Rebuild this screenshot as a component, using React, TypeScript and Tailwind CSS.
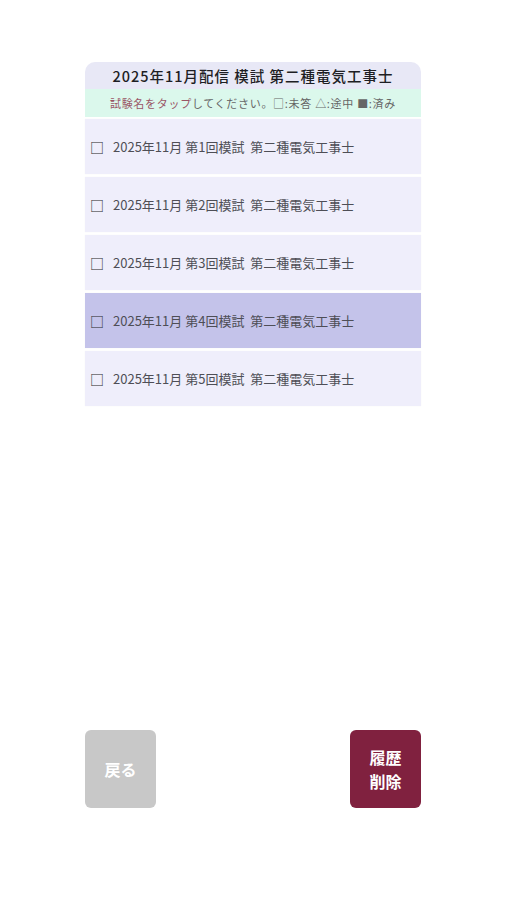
import React from "react";

const font = { fontFamily: '"Noto Sans CJK JP", "Noto Sans", sans-serif' };

export default function App() {
  const items = [1, 2, 3, 4, 5];
  return (
    <div className="min-h-[900px] w-full bg-white flex flex-col items-center" style={font}>
      <div className="mt-[62px] w-[336px] flex flex-col">
        <div className="h-[27px] rounded-t-[10px] bg-[#e8e8f6] flex items-center justify-center text-[14.5px] font-medium text-[#1e1e24] tracking-[1px]">
          2025年11月配信 模試 第二種電気工事士
        </div>
        <div className="h-[28px] bg-[#dbf8ec] flex items-center justify-center text-[11px] tracking-[0.7px] text-[#666]">
          <span className="text-[#9a5566]">試験名をタップ</span>
          <span>してください。□:未答 △:途中 ■:済み</span>
        </div>
        <div className="flex flex-col gap-[3px] mt-[2px]">
          {items.map((n) => (
            <div
              key={n}
              className={
                "h-[55px] flex items-center pl-[5px] text-[13px] text-[#4e4e56] shadow-[0_0_1px_rgba(0,0,0,0.05)] " +
                (n === 4 ? "bg-[#c4c3ea]" : "bg-[#efeefb]")
              }
            >
              <span className="text-[14px] text-[#2a2a2a] w-[23px] leading-none">□</span>
              <span>2025年11月 第{n}回模試&nbsp;&nbsp;第二種電気工事士</span>
            </div>
          ))}
        </div>
      </div>
      <div className="mt-[324px] w-[336px] flex justify-between">
        <button className="w-[71px] h-[78px] rounded-[6px] bg-[#c8c8c8] text-white text-[16px] font-bold flex items-center justify-center">
          戻る
        </button>
        <button className="w-[71px] h-[78px] rounded-[6px] bg-[#80213f] text-white text-[16px] font-bold flex flex-col items-center justify-center leading-[24px]">
          <span>履歴</span>
          <span>削除</span>
        </button>
      </div>
    </div>
  );
}
